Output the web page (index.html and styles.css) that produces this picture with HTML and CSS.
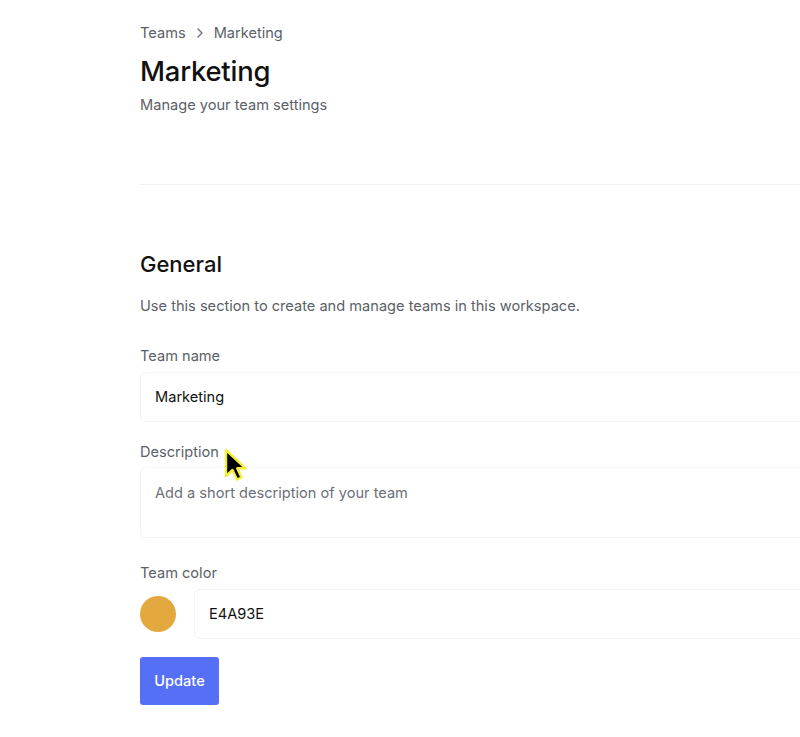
FILE: index.html
```html
<!DOCTYPE html>
<html>
<head>
<meta charset="utf-8">
<link rel="stylesheet" href="styles.css">
</head>
<body>
<div class="page">
  <header class="head">
    <nav class="crumbs"><span>Teams</span><svg class="chev" width="14" height="14" viewBox="0 0 14 14"><path d="M5 3l4 4-4 4" fill="none" stroke="#6b7280" stroke-width="1.4" stroke-linecap="round" stroke-linejoin="round"/></svg><span>Marketing</span></nav>
    <h1 class="title">Marketing</h1>
    <p class="sub">Manage your team settings</p>
  </header>
  <hr class="divider">
  <section class="general">
    <h2 class="sec-title">General</h2>
    <p class="sec-desc">Use this section to create and manage teams in this workspace.</p>
    <label class="label">Team name</label>
    <div class="input">Marketing</div>
    <div class="desc-label-wrap">
      <label class="label">Description</label>
      <svg class="cursor" width="28" height="38" viewBox="0 0 28 38"><path d="M3 2 L3 28 L9.5 22 L14 31.5 L18.5 29.5 L14.2 20.3 L22.5 20.3 Z" fill="#000" stroke="#f2ee3a" stroke-width="2.4" stroke-linejoin="round"/></svg>
    </div>
    <div class="textarea placeholder">Add a short description of your team</div>
    <label class="label">Team color</label>
    <div class="color-row">
      <span class="swatch"></span>
      <div class="input color-input">E4A93E</div>
    </div>
    <button class="btn">Update</button>
  </section>
</div>
</body>
</html>
```
FILE: styles.css
```css
html, body {
  margin: 0;
  padding: 0;
  background: #ffffff;
  overflow: hidden;
}
body {
  font-family: Inter, "Noto Sans", "Liberation Sans", sans-serif;
  color: #111;
}
.page {
  margin-left: 140px;
  width: 720px;
  padding-top: 23px;
}
.crumbs {
  display: flex;
  align-items: center;
  gap: 6px;
  font-size: 14.6px;
  line-height: 20px;
  color: #5b5f69;
}
.chev { margin: 0 1px; }
.title {
  margin: 11px 0 0;
  font-size: 27.4px;
  line-height: 34px;
  font-weight: 500;
  color: #111;
  letter-spacing: -0.2px;
}
.sub {
  margin: 7px 0 0;
  font-size: 14.6px;
  line-height: 20px;
  color: #5b5f69;
}
.divider {
  border: 0;
  border-top: 1px solid #f0f0f2;
  margin: 69px 0 0;
}
.general { padding-top: 65px; }
.sec-title {
  margin: 0;
  font-size: 22px;
  line-height: 28px;
  font-weight: 500;
  color: #111;
}
.sec-desc {
  margin: 18px 0 0;
  font-size: 14.6px;
  line-height: 20px;
  color: #5b5f69;
}
.label {
  display: block;
  font-size: 14.6px;
  line-height: 20px;
  color: #5b5f69;
}
.sec-desc + .label { margin-top: 30px; }
.input {
  box-sizing: border-box;
  margin-top: 6px;
  height: 50px;
  border: 1px solid #f4f4f5;
  border-radius: 6px;
  padding: 0 14px;
  display: flex;
  align-items: center;
  font-size: 14.6px;
  color: #111;
}
.desc-label-wrap {
  position: relative;
  margin-top: 20px;
}
.cursor {
  position: absolute;
  left: 83px;
  top: 6px;
}
.textarea {
  box-sizing: border-box;
  margin-top: 5px;
  height: 71px;
  border: 1px solid #f4f4f5;
  border-radius: 6px;
  padding: 15px 14px;
  font-size: 14.6px;
  line-height: 20px;
}
.placeholder { color: #6b6f78; }
.textarea + .label { margin-top: 25px; }
.color-row {
  display: flex;
  align-items: center;
  gap: 18px;
  margin-top: 6px;
}
.swatch {
  width: 36px;
  height: 36px;
  border-radius: 50%;
  background: #e4a93e;
  flex: none;
}
.color-input {
  flex: 1;
  margin-top: 0;
}
.btn {
  margin-top: 18px;
  width: 79px;
  height: 48px;
  border: 0;
  border-radius: 3px;
  background: #5570f7;
  color: #fff;
  font-family: inherit;
  font-size: 14.6px;
  font-weight: 500;
  cursor: pointer;
}
```
